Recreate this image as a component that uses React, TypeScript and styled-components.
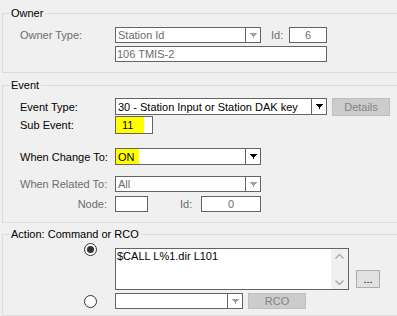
import React from "react";
import styled, { createGlobalStyle } from "styled-components";

const Global = createGlobalStyle`
  html, body { margin: 0; padding: 0; background: #f0f0f0; overflow: hidden; }
  body { font-family: "Liberation Sans", Arial, sans-serif; font-size: 11px; color: #000; }
  * { box-sizing: border-box; }
`;

const Page = styled.div`
  width: 397px;
  height: 316px;
  overflow: hidden;
  padding-top: 7px;
`;

const Group = styled.fieldset<{ $gap?: number; $pt: number; $pb: number }>`
  margin: ${(p) => p.$gap ?? 0}px 0 0 2px;
  width: 420px;
  border: 1px solid #dcdcdc;
  padding: ${(p) => p.$pt}px 0 ${(p) => p.$pb}px 0;
  min-inline-size: 0;
`;

const Legend = styled.legend`
  margin-left: 6px;
  padding: 0 2px 0 2px;
  line-height: 13px;
  height: 13px;
  font-size: 11px;
  color: #000;
`;

const Row = styled.div<{ $mt?: number; $h: number }>`
  display: flex;
  align-items: center;
  height: ${(p) => p.$h}px;
  margin-top: ${(p) => p.$mt ?? 0}px;
  padding-left: 17px;
`;

const Label = styled.div<{ $disabled?: boolean; $right?: boolean }>`
  width: 95px;
  flex: none;
  white-space: nowrap;
  color: ${(p) => (p.$disabled ? "#6d6d6d" : "#000")};
  text-align: ${(p) => (p.$right ? "right" : "left")};
  padding-right: ${(p) => (p.$right ? "8px" : "0")};
`;

const InlineLabel = styled.div<{ $w: number; $ml: number }>`
  width: ${(p) => p.$w}px;
  margin-left: ${(p) => p.$ml}px;
  color: #6d6d6d;
  flex: none;
`;

const Box = styled.div<{ $w: number; $h: number; $disabled?: boolean; $center?: boolean }>`
  width: ${(p) => p.$w}px;
  height: ${(p) => p.$h}px;
  flex: none;
  border: 1px solid #646464;
  background: #fff;
  display: flex;
  align-items: center;
  justify-content: ${(p) => (p.$center ? "center" : "flex-start")};
  padding-left: ${(p) => (p.$center ? 0 : 1)}px;
  color: ${(p) => (p.$disabled ? "#6d6d6d" : "#000")};
  white-space: nowrap;
  overflow: hidden;
`;

const ComboText = styled.div`
  flex: 1;
  height: 100%;
  display: flex;
  align-items: center;
  overflow: hidden;
`;

const Highlight = styled.span<{ $w: number; $pl: number }>`
  display: flex;
  align-items: center;
  height: 100%;
  width: ${(p) => p.$w}px;
  padding-left: ${(p) => p.$pl}px;
  background: #ffff00;
`;

const DropButton = styled.div`
  width: 15px;
  height: 100%;
  flex: none;
  border-left: 1px solid #646464;
  display: flex;
  align-items: center;
  justify-content: center;
  background: #fff;
`;

const Button = styled.div<{ $w: number; $h: number; $ml: number; $disabled?: boolean }>`
  width: ${(p) => p.$w}px;
  height: ${(p) => p.$h}px;
  margin-left: ${(p) => p.$ml}px;
  flex: none;
  display: flex;
  align-items: center;
  justify-content: center;
  background: ${(p) => (p.$disabled ? "#cccccc" : "#e1e1e1")};
  border: 1px solid ${(p) => (p.$disabled ? "#bfbfbf" : "#adadad")};
  color: ${(p) => (p.$disabled ? "#838383" : "#000")};
`;

const RadioCell = styled.div`
  width: 95px;
  flex: none;
  display: flex;
  justify-content: flex-end;
  padding-right: 18px;
`;

const Radio = styled.div<{ $checked?: boolean }>`
  width: 13px;
  height: 13px;
  border-radius: 50%;
  border: 1px solid #333;
  background: #fff;
  display: flex;
  align-items: center;
  justify-content: center;
  &::after {
    content: "";
    display: ${(p) => (p.$checked ? "block" : "none")};
    width: 7px;
    height: 7px;
    border-radius: 50%;
    background: #333;
  }
`;

const TextArea = styled.div`
  width: 234px;
  height: 42px;
  flex: none;
  border: 1px solid #646464;
  background: #fff;
  display: flex;
`;

const AreaText = styled.div`
  flex: 1;
  padding: 1px 0 0 1px;
  line-height: 13px;
`;

const ScrollBar = styled.div`
  width: 17px;
  flex: none;
  background: #f0f0f0;
  display: flex;
  flex-direction: column;
  justify-content: space-between;
  align-items: center;
  padding: 5px 0 4px;
`;

const ActionRow = styled.div<{ $mt?: number }>`
  display: flex;
  align-items: center;
  margin-top: ${(p) => p.$mt ?? 0}px;
  padding-left: 17px;
`;

const Arrow = ({ color }: { color: string }) => (
  <svg width="7" height="5" viewBox="0 0 7 5" shapeRendering="crispEdges">
    <rect x="0" y="0" width="7" height="1" fill={color} />
    <rect x="1" y="1" width="5" height="1" fill={color} />
    <rect x="2" y="2" width="3" height="1" fill={color} />
    <rect x="3" y="3" width="1" height="2" fill={color} />
  </svg>
);

const Chevron = ({ up }: { up?: boolean }) => (
  <svg width="9" height="5" viewBox="0 0 9 5">
    <polyline
      points={up ? "0.5,4.5 4.5,0.5 8.5,4.5" : "0.5,0.5 4.5,4.5 8.5,0.5"}
      fill="none"
      stroke="#a6a6a6"
      strokeWidth="1.3"
    />
  </svg>
);

const Combo = ({
  w,
  h,
  disabled,
  children,
}: {
  w: number;
  h: number;
  disabled?: boolean;
  children?: React.ReactNode;
}) => (
  <Box $w={w} $h={h} $disabled={disabled} style={{ paddingLeft: 0 }}>
    <ComboText>{children}</ComboText>
    <DropButton>
      <Arrow color={disabled ? "#a0a0a0" : "#000"} />
    </DropButton>
  </Box>
);

export default function App() {
  return (
    <Page>
      <Global />
      <Group $pt={7} $pb={10}>
        <Legend>Owner</Legend>
        <Row $h={16}>
          <Label $disabled>Owner Type:</Label>
          <Combo w={146} h={16} disabled>
            <span style={{ paddingLeft: 2 }}>Station Id</span>
          </Combo>
          <InlineLabel $w={18} $ml={10}>Id:</InlineLabel>
          <Box $w={38} $h={16} $disabled $center>6</Box>
        </Row>
        <Row $h={16} $mt={3}>
          <Label />
          <Box $w={212} $h={16} $disabled>106 TMIS-2</Box>
        </Row>
      </Group>

      <Group $gap={6} $pt={6} $pb={10}>
        <Legend>Event</Legend>
        <Row $h={17}>
          <Label>Event Type:</Label>
          <Combo w={212} h={17}>
            <span style={{ paddingLeft: 2 }}>30 - Station Input or Station DAK key</span>
          </Combo>
          <Button $w={58} $h={18} $ml={5} $disabled>Details</Button>
        </Row>
        <Row $h={18} $mt={1}>
          <Label>Sub Event:</Label>
          <Box $w={38} $h={18} style={{ paddingLeft: 0 }}>
            <Highlight $w={28} $pl={6}>11</Highlight>
          </Box>
        </Row>
        <Row $h={17} $mt={14}>
          <Label>When Change To:</Label>
          <Combo w={146} h={17}>
            <Highlight $w={23} $pl={2}>ON</Highlight>
          </Combo>
        </Row>
        <Row $h={16} $mt={11}>
          <Label $disabled>When Related To:</Label>
          <Combo w={146} h={16} disabled>
            <span style={{ paddingLeft: 2 }}>All</span>
          </Combo>
        </Row>
        <Row $h={16} $mt={4}>
          <Label $disabled $right>Node:</Label>
          <Box $w={33} $h={16} $disabled />
          <InlineLabel $w={21} $ml={32}>Id:</InlineLabel>
          <Box $w={60} $h={16} $disabled $center>0</Box>
        </Row>
      </Group>

      <Group $gap={5} $pt={7} $pb={6}>
        <Legend>Action: Command or RCO</Legend>
        <ActionRow>
          <RadioCell>
            <Radio $checked style={{ marginTop: -26 }} />
          </RadioCell>
          <TextArea>
            <AreaText>$CALL L%1.dir L101</AreaText>
            <ScrollBar>
              <Chevron up />
              <Chevron />
            </ScrollBar>
          </TextArea>
          <Button $w={24} $h={18} $ml={7} style={{ marginTop: 20 }}>...</Button>
        </ActionRow>
        <ActionRow $mt={3}>
          <RadioCell>
            <Radio />
          </RadioCell>
          <Combo w={128} h={16} disabled />
          <Button $w={58} $h={16} $ml={5} $disabled>RCO</Button>
        </ActionRow>
      </Group>
    </Page>
  );
}
